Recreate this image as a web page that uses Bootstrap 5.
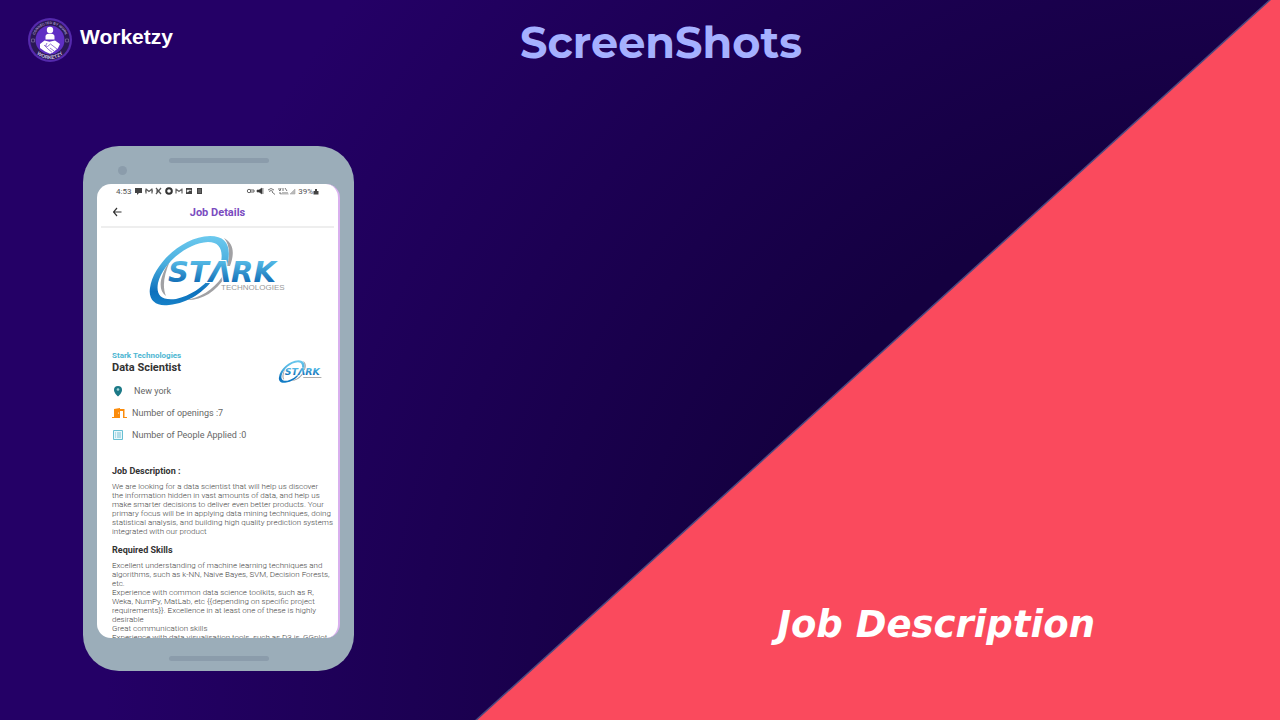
<!DOCTYPE html>
<html lang="en">
<head>
<meta charset="utf-8">
<meta name="viewport" content="width=device-width, initial-scale=1">
<title>Worketzy – ScreenShots</title>
<link href="https://cdn.jsdelivr.net/npm/bootstrap@5.3.0/dist/css/bootstrap.min.css" rel="stylesheet">
<style>
  body { background: #150040; font-family: "Liberation Sans", Arial, sans-serif; }
  .slide { background: radial-gradient(circle at 100% 100%, #140040 0, #140040 38%, #240066 80%, #240066 100%); overflow: hidden; isolation: isolate; }
  .wedge { z-index: -1; }
  .slide-head { display: grid; grid-template-columns: 146px 1fr 132px; padding: 18px 0 0 28px; height: 84px; }
  .brand-name { font-size: 21px; line-height: 38px; font-weight: 700; }
  .headline { font: 700 43px/50px Montserrat, Inter, sans-serif; color: #a5b0ff; }
  .phone-col { padding: 62px 0 48px 83px; }
  .phone { width: 271px; background: #9badb9; border-radius: 36px; padding: 12px 14px 10px; }
  .slot { width: 100px; height: 5px; border-radius: 3px; background: #8b9cab; }
  .lens { width: 9px; height: 9px; border-radius: 50%; background: #8b9cab; margin: 3px 0 9px 21px; }
  .screen { height: 454px; border-radius: 14px; overflow: hidden; background: #fff; border-right: 2px solid #d9b0ee; font-family: Roboto, sans-serif; color: #666; font-size: 8px; line-height: 9px; white-space: nowrap; margin-bottom: 18px; }
  .status { height: 14px; padding: 0 19px; color: #555; }
  .app-bar { height: 30px; display: grid; grid-template-columns: 32px 1fr 32px; margin: 0 4px; border-bottom: 2px solid #eee; }
  .app-title { font-size: 11px; line-height: 13px; font-weight: 700; color: #7a4cc0; }
  .content-pad { padding: 0 6px 0 15px; }
  .hero-logo { height: 123px; padding: 6px 0 0 50px; }
  .job-head { height: 29px; }
  .company { font-size: 8px; font-weight: 700; color: #4db6d2; }
  .role { font-size: 11px; line-height: 16px; font-weight: 700; color: #333; }
  .fact { height: 22px; font-size: 9px; }
  .fact svg { width: 20px; flex: none; }
  .fact .pin { width: 22px; }
  .section-name { font-size: 9px; line-height: 10px; font-weight: 700; color: #333; margin: 9px 0 6px; }
  .fact + .section-name { margin-top: 20px; }
  .prose { font-weight: 300; color: #444; margin: 0; }
  .caption { font: italic 700 37px/48px "DejaVu Sans", Verdana, sans-serif; padding: 0 185px 71px 0; }
</style>
</head>
<body>
<div class="slide position-relative min-vh-100 d-flex flex-column">
  <svg class="wedge position-absolute top-0 start-0 w-100 h-100" viewBox="0 0 1280 720" preserveAspectRatio="none" aria-hidden="true">
    <path d="M1271 -1 1282 -1V722H474Z" fill="#fa4a5d"/>
    <path d="M1271 -1 474 722" stroke="#4b4a82" stroke-width="1.5"/>
  </svg>

  <header class="slide-head text-white">
    <div class="d-flex gap-2">
      <svg width="44" height="44" viewBox="0 0 44 44" class="flex-shrink-0" role="img" aria-label="Worketzy logo">
        <defs>
          <path id="arcTop" d="M6 22a16 16 0 0 1 32 0"/>
          <path id="arcBottom" d="M3 22a19 19 0 0 0 38 0"/>
        </defs>
        <circle cx="22" cy="22" r="22" fill="#5529ad"/>
        <circle cx="22" cy="22" r="19.800" fill="#2a1854"/>
        <circle cx="22" cy="22" r="14.500" fill="#5f2fc4"/>
        <g fill="#a797c8" font-family="Liberation Sans" font-weight="700" font-size="3.500">
          <text text-anchor="middle"><textPath href="#arcTop" startOffset="50%">CONNECTED BY WORK</textPath></text>
          <text text-anchor="middle" font-size="5" fill="#cfc4e4"><textPath href="#arcBottom" startOffset="50%">WORKETZY</textPath></text>
        </g>
        <path d="M3.500 21h3v3h-3zM37.500 21h3v3h-3z" fill="none" stroke="#75659b" stroke-width=".8"/>
        <g fill="#fff">
          <circle cx="22" cy="12" r="3.200"/>
          <path d="M17.500 21.500v-3c0-2 1.500-2.800 3-2.800h3c1.500 0 3 .8 3 2.800v3z"/>
          <path d="m12 26 4.500-3.500 5 1.300 5.500-1.400 5 3.700-2.200 4.300-5.300 4.300-2.500 1-5-2.200-5-3.500z"/>
        </g>
        <path d="m16 27 4 4m-1-6-1.500 3 2 .5 3-2.500 6.500 5M20 31l4 3.300M22 30l4 3" fill="none" stroke="#6a40c4" stroke-width=".7"/>
      </svg>
      <span class="brand-name">Worketzy</span>
    </div>
    <h1 class="headline text-center m-0">ScreenShots</h1>
  </header>

  <main class="d-flex flex-grow-1 justify-content-between">
    <div class="phone-col">
      <div class="phone">
        <div class="slot mx-auto"></div>
        <div class="lens"></div>
        <div class="screen">
          <div class="status d-flex justify-content-between align-items-center">
            <div class="d-flex align-items-center gap-1">
              <span>4:53</span>
              <svg width="68" height="8" viewBox="0 0 68 8" fill="#444" aria-hidden="true">
                <path d="M0 1h7v5H4L2 8V6H0z"/>
                <path d="M11 1.500v5M17 1.500v5M11 2l3 2.500L17 2M10 4h1M17 4h1M21 1l5 6M26 1l-5 6M21 4h2" fill="none" stroke="#555" stroke-width="1.200"/>
                <circle cx="34" cy="4" r="2.800" fill="none" stroke="#333" stroke-width="2"/>
                <path d="M41 1.500v5M47 1.500v5M41 2l3 2.500L47 2" fill="none" stroke="#666" stroke-width="1.200"/>
                <path d="M51 1h6v6h-6zM62 1h5v6h-5z"/>
                <path d="M52 3h4v1l-1-1-2 2h-1zM63 3h3M63 5h3" fill="#fff" stroke="#ccc" stroke-width=".5"/>
              </svg>
            </div>
            <div class="d-flex align-items-center">
              <svg width="52" height="8" viewBox="0 0 52 8" fill="none" stroke="#666" aria-hidden="true">
                <circle cx="3" cy="4" r="1.700"/><path d="M4 3h4v2M4 5h4"/>
                <path d="M11 3h2l3-2v6l-3-2h-2zM17 1v6" fill="#333" stroke="#444" stroke-width=".6"/>
                <path d="M22 3q3-3 6 0M23 4.500q2-2 4 0M26 5l3 2.500" stroke-width=".9"/>
                <path d="M33 1v2l1 1 1-3M37 1v3M39 1l2 3M33 6h2v1.500M37 5v2.500M39 5v2.500M41 5v2.500" stroke-width=".9"/>
                <path d="m44 7 5-5v5zM42 7h1" fill="#bbb" stroke="#aaa" stroke-width=".6"/>
              </svg>
              <span>39%</span>
              <svg width="6" height="8" viewBox="0 0 6 8" aria-hidden="true"><path d="M2 2h2v2h1.500v3.500h-5V4H2z" fill="#444"/></svg>
            </div>
          </div>
          <div class="app-bar align-items-center">
            <a href="#" class="d-flex ps-2 ms-1" aria-label="Back">
              <svg width="10" height="10" viewBox="0 0 10 10" fill="none" stroke="#333" stroke-width="1.200"><path d="M8.500 5H0M4 1 0.500 5l3.500 4"/></svg>
            </a>
            <div class="app-title text-center">Job Details</div>
          </div>
          <div class="hero-logo">
            <svg width="142" height="76" viewBox="0 0 142 76" role="img" aria-label="Stark Technologies">
              <defs>
                <linearGradient id="ringFill" x1="0" y1="0" x2="0" y2="1"><stop offset="0" stop-color="#6cc9ee"/><stop offset=".4" stop-color="#4aaede"/><stop offset=".8" stop-color="#0d71bd"/><stop offset="1" stop-color="#1681c8"/></linearGradient>
                <linearGradient id="wordFill" x1="0" y1="0" x2="0" y2="1"><stop offset=".2" stop-color="#52b7e4"/><stop offset=".8" stop-color="#1470b8"/></linearGradient>
                <g id="starkMark">
                  <path d="M77 4c11 6 10 17 6 28h-3c3-11 3-21-3-28zM19 62c-9-6-6-21 4-35-6 14-8 25-4 35zM38 66c15-2 28-10 37-23h3c-9 15-24 24-40 23z" fill="#a1a1a4"/>
                  <path fill-rule="evenodd" d="M63 2C34 3 6 31 3 54c-2 12 6 19 19 17 20-2 36-14 45-27l-3-1C56 53 43 62 29 65 13 67 9 60 11 49 16 29 40 9 61 8c13 0 16 10 12 24h7C85 13 80 2 63 2z" fill="url(#ringFill)"/>
                  <text x="21" y="48" font-family="DejaVu Sans" font-weight="700" font-style="italic" font-size="29" fill="url(#wordFill)" stroke="#fff" stroke-width="2" paint-order="stroke">STΛRK</text>
                </g>
              </defs>
              <use href="#starkMark"/>
              <text x="74" y="56" font-family="Liberation Sans" font-size="8" fill="#999">TECHNOLOGIES</text>
            </svg>
          </div>
          <div class="content-pad">
            <div class="job-head d-flex justify-content-between align-items-start">
              <div>
                <div class="company">Stark Technologies</div>
                <div class="role">Data Scientist</div>
              </div>
              <svg width="46" height="26" viewBox="0 0 142 76" class="mt-2 me-2 flex-shrink-0" aria-hidden="true"><use href="#starkMark"/><path d="M78 55h56" stroke="#aaa" stroke-width="3"/></svg>
            </div>
            <div class="fact d-flex align-items-center">
              <svg class="pin" height="12" viewBox="0 0 22 12" aria-hidden="true"><path d="M6 1a4 4 0 0 1 4 4c0 3-4 6.500-4 6.500S2 8 2 5a4 4 0 0 1 4-4z" fill="#1c7987"/><circle cx="6" cy="4.500" r="1.300" fill="#a4d4d7"/></svg>
              <span>New york</span>
            </div>
            <div class="fact d-flex align-items-center">
              <svg height="12" viewBox="0 0 20 12" aria-hidden="true"><path d="M0 10h2V2l6-1v10H0zM8 2h4.500v8H15v1h-4V4H8z" fill="#fb8c0c"/><circle cx="6.500" cy="6" r=".6" fill="#fff"/></svg>
              <span>Number of openings :7</span>
            </div>
            <div class="fact d-flex align-items-center">
              <svg height="12" viewBox="0 0 20 12" aria-hidden="true"><path d="M1.500 1.500h9v9h-9z" fill="#e8f7fa" stroke="#68bfd3"/><path d="M3 4h1M5 4h4M3 6h1M5 6h4M3 8h1M5 8h4" stroke="#61b4cb" stroke-width=".8"/></svg>
              <span>Number of People Applied :0</span>
            </div>
            <h2 class="section-name">Job Description :</h2>
            <p class="prose">We are looking for a data scientist that will help us discover<br>the information hidden in vast amounts of data, and help us<br>make smarter decisions to deliver even better products. Your<br>primary focus will be in applying data mining techniques, doing<br>statistical analysis, and building high quality prediction systems<br>integrated with our product</p>
            <h2 class="section-name">Required Skills</h2>
            <p class="prose">Excellent understanding of machine learning techniques and<br>algorithms, such as k-NN, Naive Bayes, SVM, Decision Forests,<br>etc.<br>Experience with common data science toolkits, such as R,<br>Weka, NumPy, MatLab, etc {{depending on specific project<br>requirements}}. Excellence in at least one of these is highly<br>desirable<br>Great communication skills<br>Experience with data visualisation tools, such as D3.js, GGplot</p>
          </div>
        </div>
        <div class="slot mx-auto"></div>
      </div>
    </div>
    <h2 class="caption text-white align-self-end m-0">Job Description</h2>
  </main>
</div>
<script src="https://cdn.jsdelivr.net/npm/bootstrap@5.3.0/dist/js/bootstrap.bundle.min.js"></script>
</body>
</html>
